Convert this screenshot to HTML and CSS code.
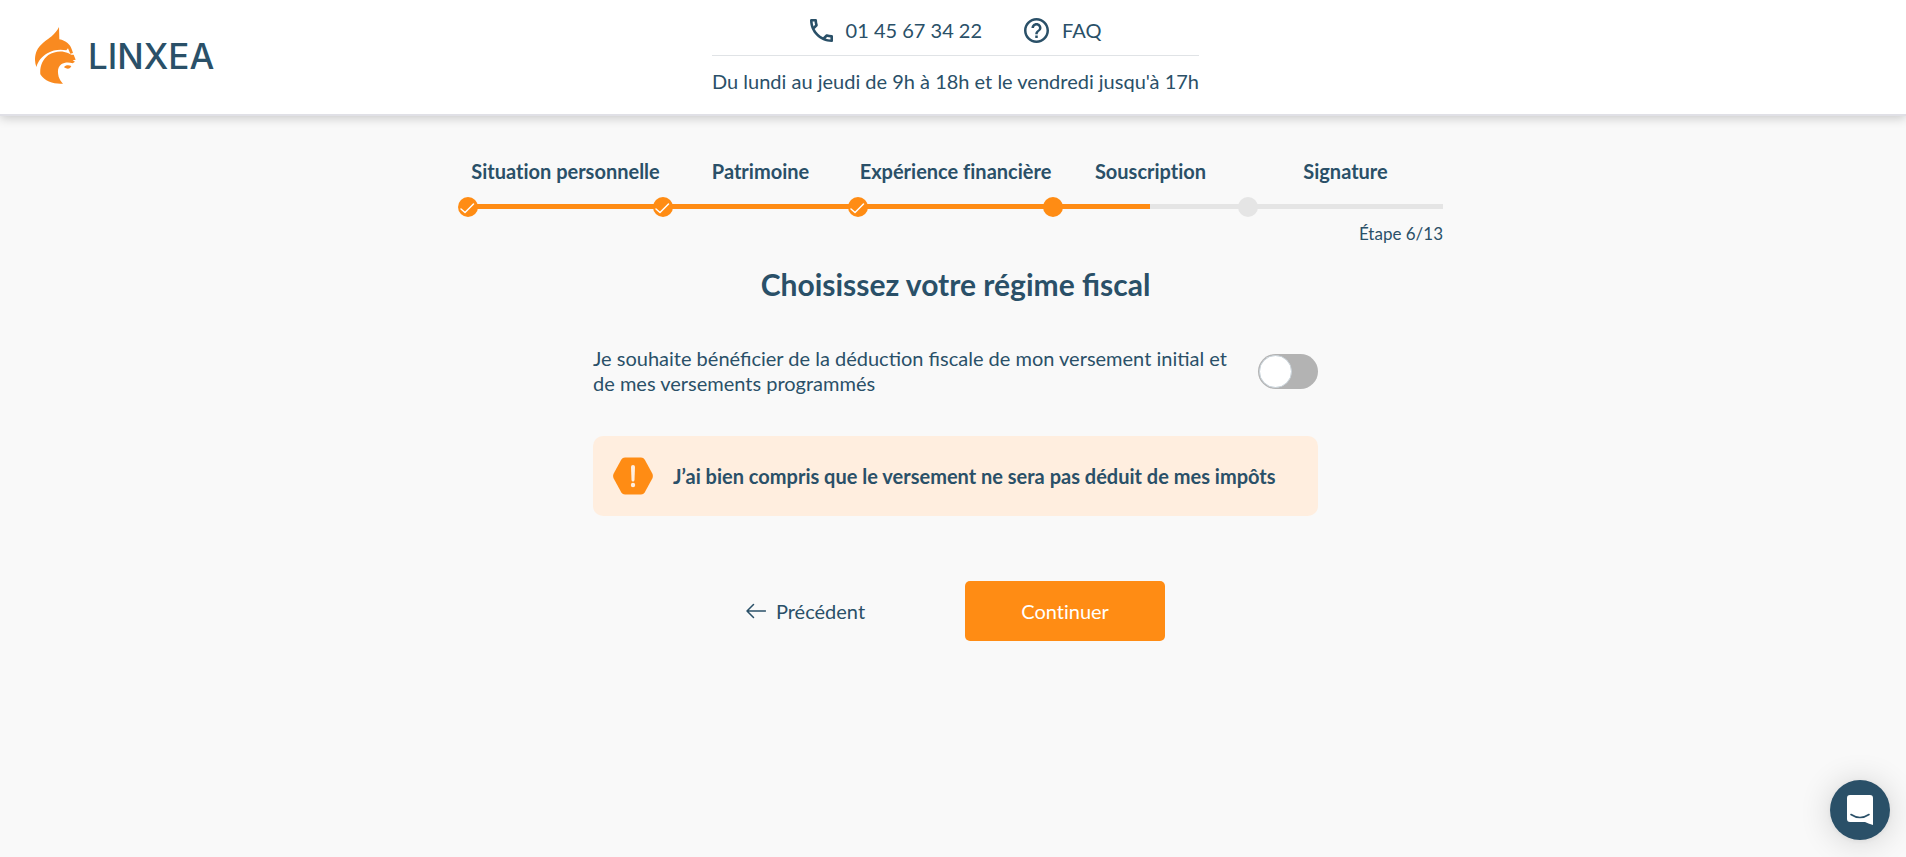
FILE: index.html
```html
<!DOCTYPE html>
<html lang="fr">
<head>
    <meta charset="UTF-8" />
    <meta name="viewport" content="width=device-width, initial-scale=1.0" />
    <title>Linxea - Choisissez votre régime fiscal</title>
    <link rel="stylesheet" href="styles.css">
</head>
<body>
    <header class="header">
        <a class="logo" href="#">
            <svg class="logo-mark" viewBox="0 0 123 171" aria-hidden="true">
                <path fill="#f98a20" d="M72 0 L73 37 C93 41 106 52 111 69 L114 78 L106 80 L102 71 L99 64 L94 70 C76 66 55 68 37 79 C20 89 10 102 4 120 C-2 104 -1 86 5 72 C14 52 38 38 50 28 C60 19 67 10 72 0Z" />
                <path fill="#f98a20" d="M16 142 C14 118 22 98 40 84 C58 72 82 70 99 78 L109 83 L116 83 L122 98 L113 100 L120 104 L113 109 C101 105 88 106 79 112 C68 121 67 134 71 149 C74 158 79 164 84 170 C60 172 29 165 16 142Z" />
                <path fill="#f98a20" d="M87 121 C91 114 101 114 109 117 C106 125 98 128 87 121Z" />
            </svg>
            <span class="logo-name">LINXEA</span>
        </a>

        <div class="contact">
            <div class="contact-links">
                <a class="contact-link" href="tel:0145673422">
                    <svg class="icon-phone" viewBox="3 3 18 18" aria-hidden="true">
                        <path d="M6.54 5c.06.89.21 1.76.45 2.59l-1.2 1.2c-.41-1.2-.67-2.47-.76-3.79h1.51m9.86 12.02c.85.24 1.72.39 2.6.45v1.49c-1.32-.09-2.59-.35-3.8-.75l1.2-1.19M7.5 3H4c-.55 0-1 .45-1 1 0 9.39 7.61 17 17 17 .55 0 1-.45 1-1v-3.49c0-.55-.45-1-1-1-1.24 0-2.45-.2-3.57-.57-.1-.04-.21-.05-.31-.05-.26 0-.51.1-.71.29l-2.2 2.2c-2.83-1.45-5.15-3.76-6.59-6.59l2.2-2.2c.28-.28.36-.67.25-1.02C8.7 6.45 8.5 5.25 8.5 4c0-.55-.45-1-1-1z" />
                    </svg>
                    01 45 67 34 22
                </a>
                <a class="contact-link" href="#">
                    <svg class="icon-faq" viewBox="2 2 20 20" aria-hidden="true">
                        <path d="M11 18h2v-2h-2v2zm1-16C6.48 2 2 6.48 2 12s4.48 10 10 10 10-4.48 10-10S17.52 2 12 2zm0 18c-4.41 0-8-3.59-8-8s3.59-8 8-8 8 3.59 8 8-3.59 8-8 8zm0-14c-2.21 0-4 1.79-4 4h2c0-1.1.9-2 2-2s2 .9 2 2c0 2-3 1.75-3 5h2c0-2.25 3-2.5 3-5 0-2.21-1.79-4-4-4z" />
                    </svg>
                    FAQ
                </a>
            </div>
            <p class="contact-hours">Du lundi au jeudi de 9h à 18h et le vendredi jusqu'à 17h</p>
        </div>
    </header>

    <main class="main">
        <div class="stepper">
            <ol class="steps">
                <li class="step done">
                    <span class="step-label">Situation personnelle</span>
                    <span class="step-bar"><span class="step-dot">
                        <svg viewBox="0 0 20 20" aria-hidden="true"><path d="M3 12 L7 15.500 L15.500 7" /></svg>
                    </span></span>
                </li>
                <li class="step done">
                    <span class="step-label">Patrimoine</span>
                    <span class="step-bar"><span class="step-dot">
                        <svg viewBox="0 0 20 20" aria-hidden="true"><path d="M3 12 L7 15.500 L15.500 7" /></svg>
                    </span></span>
                </li>
                <li class="step done">
                    <span class="step-label">Expérience financière</span>
                    <span class="step-bar"><span class="step-dot">
                        <svg viewBox="0 0 20 20" aria-hidden="true"><path d="M3 12 L7 15.500 L15.500 7" /></svg>
                    </span></span>
                </li>
                <li class="step current" aria-current="step">
                    <span class="step-label">Souscription</span>
                    <span class="step-bar"><span class="step-dot"></span></span>
                </li>
                <li class="step">
                    <span class="step-label">Signature</span>
                    <span class="step-bar"><span class="step-dot"></span></span>
                </li>
            </ol>
            <p class="step-count">Étape 6/13</p>
        </div>

        <h1 class="title">Choisissez votre régime fiscal</h1>

        <form class="form">
            <div class="option">
                <label class="option-label" for="deduction">Je souhaite bénéficier de la déduction fiscale de mon versement initial et de mes versements programmés</label>
                <input class="switch" type="checkbox" role="switch" id="deduction" />
            </div>

            <div class="alert">
                <svg class="alert-icon" viewBox="0 0 40 38" aria-hidden="true">
                    <path fill="#ff8c14" d="M12 0.500 H28 Q30.500 0.500 31.800 2.700 L39.300 16.500 Q40.500 19 39.300 21.500 L31.800 35.300 Q30.500 37.500 28 37.500 H12 Q9.500 37.500 8.200 35.300 L0.700 21.500 Q-0.500 19 0.700 16.500 L8.200 2.700 Q9.500 0.500 12 0.500Z" />
                    <path fill="#ffeedf" d="M18 10 Q18 8 20 8 Q22 8 22 10 L21.500 23 Q21.400 24.500 20 24.500 Q18.600 24.500 18.500 23Z" />
                    <circle fill="#ffeedf" cx="20" cy="28" r="2.200" />
                </svg>
                <p class="alert-text">J’ai bien compris que le versement ne sera pas déduit de mes impôts</p>
            </div>

            <div class="actions">
                <button class="button-back" type="button">
                    <svg class="icon-arrow" viewBox="0 0 20 16" aria-hidden="true">
                        <path d="M19.500 8 H1 M7.500 1.500 L1 8 L7.500 14.500" />
                    </svg>
                    Précédent
                </button>
                <button class="button-next" type="submit">Continuer</button>
            </div>
        </form>
    </main>

    <button class="chat" type="button" aria-label="Ouvrir la messagerie">
        <svg class="chat-icon" viewBox="0 0 26 30" aria-hidden="true">
            <path fill="#fff" d="M3 0 H23 Q26 0 26 3 V30 Q21 28.500 18 27 H3 Q0 27 0 24 V3 Q0 0 3 0Z" />
            <path class="chat-smile" d="M4 19.500 Q13 25.500 22 19.500" />
        </svg>
    </button>
</body>
</html>
```
FILE: styles.css
```css
:root {
    --text-color: #2a5068;
    --primary-color: #ff8c14;
    --primary-light: #ffeedf;
    --background-color: #f9f9f9;
    --track-color: #e5e5e5;
    --switch-color: #b3b3b3;
}

* {
    box-sizing: border-box;
}

body {
    margin: 0;
    min-height: 100vh;
    font-family: Lato, sans-serif;
    font-size: 20px;
    line-height: 25px;
    color: var(--text-color);
    background-color: var(--background-color);
}

p,
h1,
ol {
    margin: 0;
    padding: 0;
}

a {
    color: inherit;
    text-decoration: none;
}

button {
    padding: 0;
    border: none;
    background: none;
    font: inherit;
    font-variant-ligatures: no-common-ligatures;
    color: inherit;
    cursor: pointer;
}

svg {
    display: block;
    flex-shrink: 0;
}

/* Header */
.header {
    display: grid;
    grid-template-columns: 1fr auto 1fr;
    align-items: start;
    padding: 0 30px 0 35px;
    background-color: #fff;
    border-bottom: 2px solid #e0e0e6;
    box-shadow: 0 2px 10px rgba(0, 0, 0, 0.2);
}

.logo {
    display: flex;
    align-items: center;
    gap: 12px;
    padding-top: 27px;
}

.logo-mark {
    width: 41px;
    height: 57px;
}

.logo-name {
    font-family: Inter, sans-serif;
    font-size: 35px;
    line-height: 40px;
    font-weight: 500;
}

.contact {
    padding-bottom: 20px;
}

.contact-links {
    display: flex;
    justify-content: center;
    gap: 42px;
    padding: 18px 0 12px;
    border-bottom: 1px solid #e0e3e6;
}

.contact-link {
    display: flex;
    align-items: center;
    gap: 13px;
}

.contact-link svg {
    fill: currentColor;
}

.icon-phone {
    width: 23px;
    height: 23px;
}

.icon-faq {
    width: 25px;
    height: 25px;
}

.contact-hours {
    padding-top: 13px;
    text-align: center;
}

/* Content */
.main {
    padding: 43px 30px 40px 35px;
}

.stepper {
    max-width: 975px;
    margin: 0 auto;
}

.steps {
    display: flex;
    list-style: none;
}

.step {
    flex: 1 1 0;
}

.step-label {
    display: block;
    font-weight: 700;
    font-variant-ligatures: no-common-ligatures;
    text-align: center;
    white-space: nowrap;
}

.step-bar {
    display: flex;
    align-items: center;
    height: 5px;
    margin-top: 20px;
    background-color: var(--track-color);
}

.step-dot {
    width: 20px;
    height: 20px;
    margin-left: -10px;
    border-radius: 50%;
    background-color: var(--track-color);
}

.step-dot path {
    fill: none;
    stroke: #fff;
    stroke-width: 1.5;
    stroke-linecap: round;
    stroke-linejoin: round;
}

.step.done .step-bar,
.step.done .step-dot,
.step.current .step-dot {
    background-color: var(--primary-color);
}

.step.current .step-bar {
    background: linear-gradient(to right, var(--primary-color) 50%, var(--track-color) 50%);
}

.step-count {
    margin-top: 12px;
    font-size: 17px;
    text-align: right;
}

.title {
    margin-top: 18px;
    font-size: 30px;
    line-height: 40px;
    font-weight: 700;
    text-align: center;
}

.form {
    max-width: 725px;
    margin: 42px auto 0;
}

.option {
    display: flex;
    align-items: center;
    justify-content: space-between;
    gap: 20px;
}

.switch {
    appearance: none;
    display: flex;
    align-items: center;
    flex-shrink: 0;
    width: 60px;
    height: 35px;
    margin: 0;
    padding: 0 1px;
    border-radius: 18px;
    background-color: var(--switch-color);
    cursor: pointer;
}

.switch::before {
    content: "";
    width: 31px;
    height: 31px;
    border: 1px solid #c9d3da;
    border-radius: 50%;
    background-color: #fff;
}

.switch:checked {
    justify-content: flex-end;
    background-color: var(--primary-color);
}

.alert {
    display: flex;
    align-items: center;
    gap: 20px;
    min-height: 80px;
    margin-top: 40px;
    padding: 20px;
    border-radius: 10px;
    background-color: var(--primary-light);
}

.alert-icon {
    width: 40px;
    height: 38px;
}

.alert-text {
    font-weight: 700;
}

.actions {
    display: flex;
    justify-content: center;
    gap: 100px;
    margin-top: 65px;
}

.button-back {
    display: flex;
    align-items: center;
    gap: 10px;
    height: 60px;
}

.icon-arrow {
    width: 20px;
    height: 16px;
}

.icon-arrow path {
    fill: none;
    stroke: currentColor;
    stroke-width: 1.5;
    stroke-linecap: round;
    stroke-linejoin: round;
}

.button-next {
    width: 200px;
    height: 60px;
    border-radius: 5px;
    color: #fff;
    background-color: var(--primary-color);
}

/* Chat launcher */
.chat {
    position: fixed;
    right: 16px;
    bottom: 17px;
    display: flex;
    align-items: center;
    justify-content: center;
    width: 60px;
    height: 60px;
    border-radius: 50%;
    background-color: var(--text-color);
    box-shadow: 0 1px 6px rgba(0, 0, 0, 0.06), 0 2px 32px rgba(0, 0, 0, 0.16);
}

.chat-icon {
    width: 26px;
    height: 30px;
}

.chat-smile {
    fill: none;
    stroke: var(--text-color);
    stroke-width: 1.6;
    stroke-linecap: round;
}

@media (max-width: 1040px) {
    .header {
        grid-template-columns: 1fr;
        justify-items: center;
    }

    .step-label {
        font-size: 16px;
        white-space: normal;
    }
}
```
